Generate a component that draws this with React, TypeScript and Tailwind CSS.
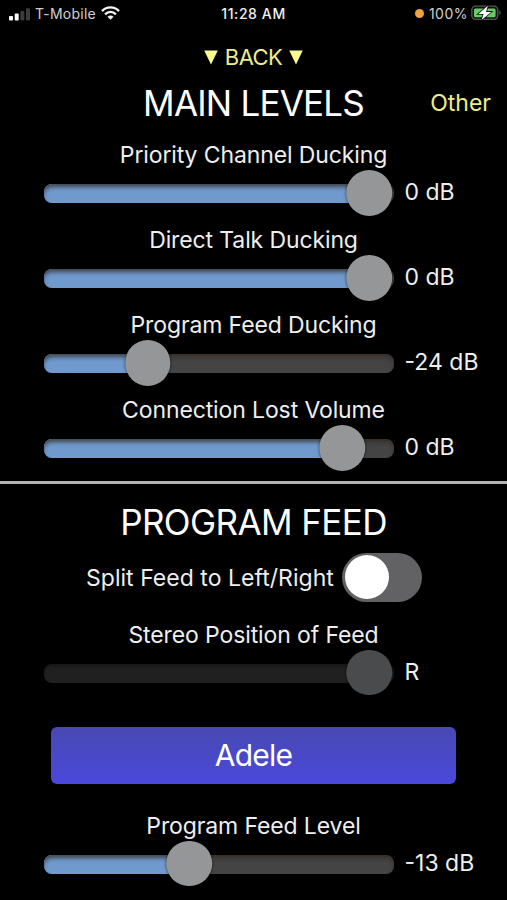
import { clsx } from 'clsx';

type SliderProps = {
  label: string;
  value: string;
  thumb: number;
  className?: string;
  disabled?: boolean;
};

function LevelSlider({ label, value, thumb, className, disabled }: SliderProps) {
  return (
    <div className={clsx('flex flex-col', className)}>
      <div className="flex h-[30px] items-center justify-center">
        <span className="whitespace-nowrap text-[23px] leading-[30px] tracking-[-0.12px] text-[#eeeeee]">{label}</span>
      </div>
      <div className="flex h-[46px] items-center pl-11">
        <div className="relative h-[46px] w-[350px] shrink-0">
          <div
            className={clsx(
              'mt-[14px] h-[19px] overflow-hidden rounded-[8px]',
              disabled ? 'bg-[#202020]' : 'bg-[#444444]',
            )}
          >
            {!disabled && <div className="h-full bg-[#7099ce]" style={{ width: thumb }} />}
            <div
              className={clsx(
                'h-[19px] rounded-[8px]',
                disabled
                  ? 'shadow-[inset_0_2px_3px_rgba(0,0,0,0.3)]'
                  : 'relative -mt-[19px] shadow-[inset_0_4px_4px_-1px_rgba(50,40,30,0.75)]',
              )}
            />
          </div>
          <div
            className={clsx(
              'absolute top-0 size-[45.5px] -translate-x-1/2 rounded-full shadow-[0_0_3px_rgba(0,0,0,0.7)]',
              disabled ? 'bg-[#4a4b4c]' : 'bg-[#949698]',
            )}
            style={{ left: thumb }}
          />
        </div>
        <span className="-mt-[2px] ml-[10.5px] whitespace-nowrap text-[23px] leading-[30px] text-[#eeeeee]">{value}</span>
      </div>
    </div>
  );
}

function StatusBar() {
  return (
    <div className="grid h-7 grid-cols-3 items-center text-[14px] leading-7">
      <div className="flex items-center pl-[9px]">
        <svg width="22" height="13" viewBox="0 0 22 13">
          <rect x="0" y="8" width="4" height="4.5" rx="1" fill="#fff" />
          <rect x="5.7" y="5.5" width="4" height="7" rx="1" fill="#fff" />
          <rect x="11.4" y="3" width="4" height="9.5" rx="1" fill="#3c3c3c" />
          <rect x="17" y="0.3" width="4" height="12.2" rx="1" fill="#3c3c3c" />
        </svg>
        <span className="ml-[4px] tracking-[0.25px] text-[#d0d0d0]">T-Mobile</span>
        <svg className="-mt-[2px] ml-[5px]" width="19" height="14" viewBox="0 0 19 14" fill="none" stroke="#f4f4f4" strokeWidth="2.3">
          <path d="M1 5.1C5.8.2 13.2.2 18 5.1" />
          <path d="M4.1 8.3c3.2-3.1 7.6-3.1 10.8 0" />
          <path d="M9.5 13.7 6.5 10.8c1.8-1.6 4.2-1.6 6 0z" fill="#f4f4f4" stroke="none" />
        </svg>
      </div>
      <div className="text-center font-medium tracking-[0.6px] text-[#f0f0f0]">11:28 AM</div>
      <div className="flex items-center justify-end pr-[6px]">
        <span className="-mt-[2px] size-[9px] rounded-full bg-[#f2a13c]" />
        <span className="ml-[5px] tracking-[0.5px] text-[#d0d0d0]">100%</span>
        <svg className="-mt-[2px] ml-[3px]" width="30" height="16" viewBox="0 0 30 16">
          <rect x="0.8" y="1.2" width="26" height="13.2" rx="3.8" fill="#111" stroke="#555" strokeWidth="1.3" />
          <rect x="3" y="3.4" width="21.6" height="8.8" rx="1.5" fill="#62cf66" />
          <path d="M28.3 5.3v5c1.8-.7 1.8-4.3 0-5z" fill="#555" />
          <path d="M16.8.8 7.4 8.9h5.2L10.6 15 20.2 6.9h-5.2z" fill="#fff" stroke="#111" strokeWidth="1.6" paintOrder="stroke" />
        </svg>
      </div>
    </div>
  );
}

function Triangle() {
  return (
    <svg width="14" height="15" viewBox="0 0 14 15">
      <path d="M0.2 0.5h13.6L7 14.5z" fill="#fbfc8f" />
    </svg>
  );
}

export default function App() {
  return (
    <div className="h-[900px] w-[507px] overflow-hidden bg-black font-['Inter',sans-serif]">
      <StatusBar />
      <div className="flex h-[58px] items-center justify-center gap-[7px] text-[#ecee8c]">
        <Triangle />
        <span className="text-[22px] tracking-[-0.6px]">BACK</span>
        <Triangle />
      </div>
      <div className="-mt-[3px] grid h-[40px] grid-cols-[1fr_auto_1fr] items-center">
        <span />
        <h1 className="whitespace-nowrap text-[35px] leading-10 tracking-[-0.8px] text-white">MAIN LEVELS</h1>
        <button className="justify-self-end pr-4 text-[23px] leading-10 text-[#ecee8c]">Other</button>
      </div>
      <div className="flex flex-col gap-[9px] pt-[17px]">
        <LevelSlider label="Priority Channel Ducking" value="0 dB" thumb={325} />
        <LevelSlider label="Direct Talk Ducking" value="0 dB" thumb={325} />
        <LevelSlider label="Program Feed Ducking" value="-24 dB" thumb={103.5} />
        <LevelSlider label="Connection Lost Volume" value="0 dB" thumb={298} className="mt-[0.4px]" />
      </div>
      <div className="mt-[9.6px] h-[3px] bg-[#b5b3b5]" />
      <h1 className="mt-[18px] text-center text-[35px] leading-10 tracking-[-0.6px] text-white">PROGRAM FEED</h1>
      <div className="mt-[10px] flex h-[51px] items-center pl-[86px]">
        <span className="mt-[2px] w-[256px] whitespace-nowrap text-[23px]  tracking-[0.03px] text-[#eeeeee]">Split Feed to Left/Right</span>
        <div className="flex h-[49px] w-[80px] items-center rounded-full bg-[#626264] pl-[2.5px]">
          <div className="size-[44px] rounded-full bg-white" />
        </div>
      </div>
      <LevelSlider label="Stereo Position of Feed" value="R" thumb={325} className="mt-[17px]" disabled />
      <button className="mx-auto mt-[31px] flex h-[57px] w-[405px] items-center justify-center rounded-[6px] bg-linear-to-b from-[#4849b2] to-[#4a48dc] text-[30px] tracking-[-0.8px] text-white">
        Adele
      </button>
      <LevelSlider label="Program Feed Level" value="-13 dB" thumb={145} className="mt-[27px]" />
    </div>
  );
}
